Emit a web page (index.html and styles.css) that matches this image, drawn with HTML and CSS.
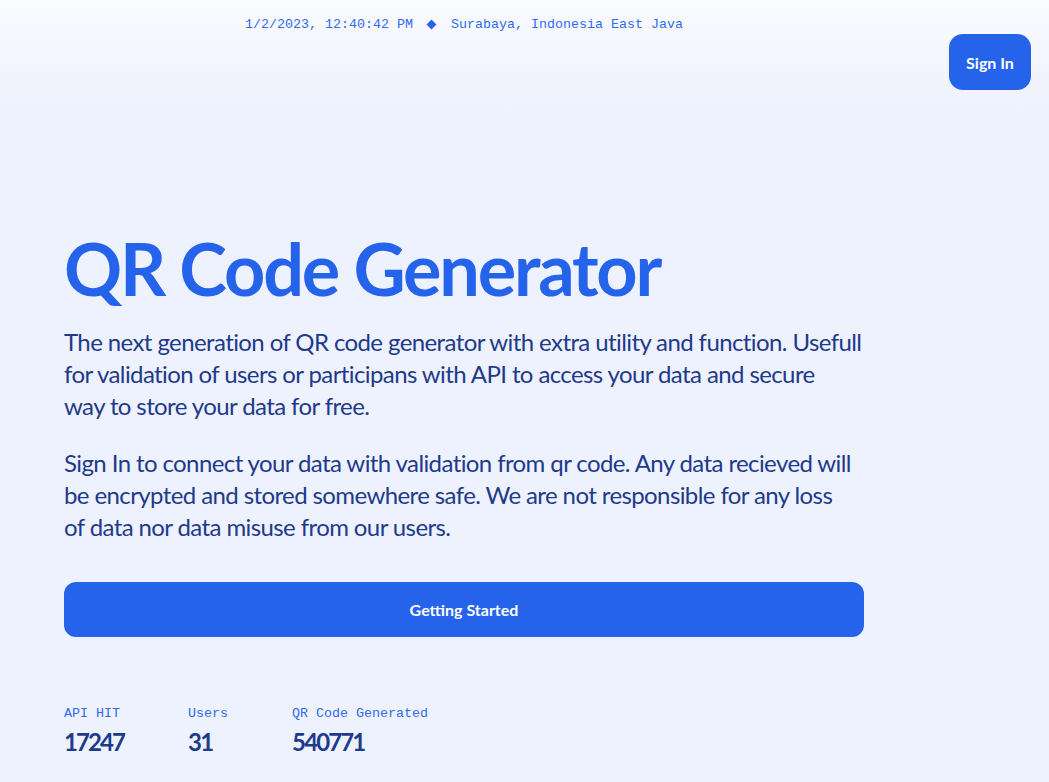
FILE: index.html
```html
<!DOCTYPE html>
<html lang="en">
<head>
<meta charset="utf-8">
<title>QR Code Generator</title>
<link rel="stylesheet" href="styles.css">
</head>
<body>
<div class="page">
  <header class="topbar">
    <div class="meta">
      <span class="meta-time">1/2/2023, 12:40:42 PM</span>
      <span class="meta-dot"></span>
      <span class="meta-place">Surabaya, Indonesia East Java</span>
    </div>
  </header>
  <button class="signin">Sign In</button>
  <main class="hero">
    <h1 class="title">QR Code Generator</h1>
    <p class="lead">The next generation of QR code generator with extra utility and function. Usefull<br>for validation of users or participans with API to access your data and secure<br>way to store your data for free.</p>
    <p class="lead">Sign In to connect your data with validation from qr code. Any data recieved will<br>be encrypted and stored somewhere safe. We are not responsible for any loss<br>of data nor data misuse from our users.</p>
    <button class="cta">Getting Started</button>
    <div class="stats">
      <div class="stat">
        <div class="stat-label">API HIT</div>
        <div class="stat-value">17247</div>
      </div>
      <div class="stat">
        <div class="stat-label">Users</div>
        <div class="stat-value">31</div>
      </div>
      <div class="stat">
        <div class="stat-label">QR Code Generated</div>
        <div class="stat-value">540771</div>
      </div>
    </div>
  </main>
</div>
</body>
</html>
```

FILE: styles.css
```css
* { box-sizing: border-box; }
html, body { margin: 0; padding: 0; }
body {
  background: #eef2fe;
  font-family: "Lato", "Noto Sans", sans-serif;
  color: #1e3a8a;
}
.page {
  position: relative;
  min-height: 782px;
  background: linear-gradient(to bottom, #fafbff 0px, #eef2fe 110px, #eef2fe 100%);
}
.topbar {
  width: 800px;
  margin-left: 64px;
  padding-top: 15px;
  height: 34px;
  display: flex;
  justify-content: center;
}
.meta {
  display: flex;
  align-items: center;
  font-family: "Liberation Mono", "DejaVu Sans Mono", monospace;
  font-size: 13.33px;
  color: #2f6af0;
  line-height: 18px;
}
.meta-dot {
  width: 7px;
  height: 7px;
  background: #2563eb;
  transform: rotate(45deg);
  margin: 0 16px 0 15px;
}
.signin {
  position: absolute;
  top: 34px;
  right: 18px;
  width: 82px;
  height: 56px;
  border: none;
  border-radius: 14px;
  background: #2563eb;
  color: #fff;
  font-family: "Lato", sans-serif;
  font-weight: 700;
  font-size: 16px;
}
.hero {
  width: 800px;
  margin-left: 64px;
  padding-top: 194px;
}
.title {
  margin: 0 0 18px;
  font-size: 72px;
  line-height: 80px;
  font-weight: 700;
  color: #2563eb;
  letter-spacing: -2.2px;
}
.lead {
  margin: 0 0 25px;
  font-size: 24px;
  line-height: 32px;
  color: #1e3a8a;
  letter-spacing: -0.6px;
  white-space: nowrap;
}
.cta {
  display: block;
  width: 800px;
  height: 55px;
  margin-top: 39px;
  border: none;
  border-radius: 12px;
  background: #2563eb;
  color: #fff;
  font-family: "Lato", sans-serif;
  font-weight: 700;
  font-size: 16px;
}
.stats {
  display: flex;
  gap: 64px;
  margin-top: 68px;
}
.stat-label {
  font-family: "Liberation Mono", "DejaVu Sans Mono", monospace;
  font-size: 13.33px;
  line-height: 18px;
  color: #2f6af0;
}
.stat-value {
  margin-top: 5px;
  font-size: 24px;
  line-height: 28px;
  font-weight: 700;
  color: #1e3a8a;
  letter-spacing: -1.9px;
}
```
